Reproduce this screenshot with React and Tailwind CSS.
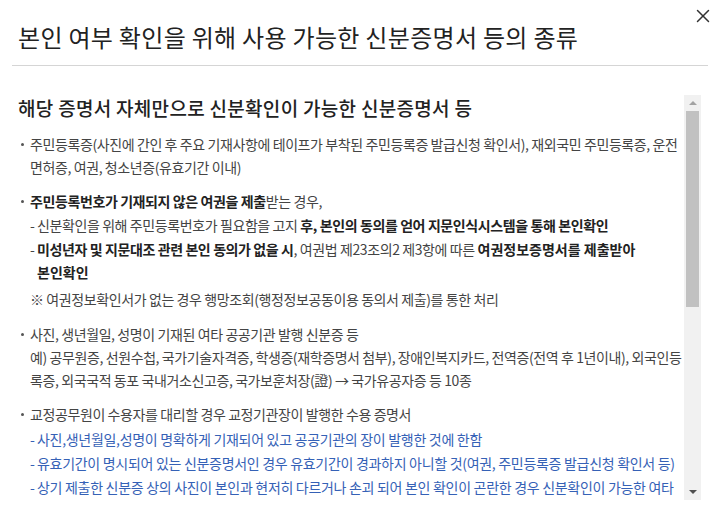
import { X } from "lucide-react";

const blue = "text-[#3561b6] tracking-[-0.3px]";

function Bullet({ children, className = "" }) {
  return (
    <li className={`flex ${className}`}>
      <span className="w-[12px] shrink-0 flex pt-[10px]">
        <span className="ml-[3px] w-[3px] h-[3px] bg-[#555] rounded-full" />
      </span>
      <div className="flex-1 min-w-0">{children}</div>
    </li>
  );
}

function Sub({ children, className = "" }) {
  return (
    <p className={`flex ${className}`}>
      <span className="shrink-0 w-[7px]">-</span>
      <span className="flex-1 min-w-0">{children}</span>
    </p>
  );
}

export default function App() {
  return (
    <div className="w-[720px] h-[506px] bg-white overflow-hidden px-[12px] font-['Noto_Sans_CJK_KR',sans-serif] text-[#444]">
      <div className="flex items-start justify-between">
        <h1 className="pl-[6px] pt-[21px] text-[24px] leading-[32px] tracking-[0.3px] text-[#222]">
          본인 여부 확인을 위해 사용 가능한 신분증명서 등의 종류
        </h1>
        <button className="mt-[5px] mr-[-6px] text-[#333]">
          <X size={22} strokeWidth={1.6} />
        </button>
      </div>
      <div className="mt-[12px] border-t border-[#d5d5d5]" />

      <div className="mt-[29px] mr-[7px] h-[405px] flex">
        <div className="flex-1 min-w-0 overflow-hidden pl-[6px] pr-[1px]">
          <h2 className="text-[19px] leading-[26px] tracking-[0.3px] text-[#222] font-medium">
            해당 증명서 자체만으로 신분확인이 가능한 신분증명서 등
          </h2>
          <ul className="mt-[12px] text-[14px] leading-[23px] tracking-[-0.4px]">
            <Bullet>
              주민등록증(사진에 간인 후 주요 기재사항에 테이프가 부착된 주민등록증 발급신청 확인서), 재외국민 주민등록증, 운전면허증, 여권, 청소년증(유효기간 이내)
            </Bullet>
            <Bullet className="mt-[11px]">
              <p>
                <b className="text-[#222]">주민등록번호가 기재되지 않은 여권을 제출</b>받는 경우,
              </p>
              <Sub className="mt-[1px]">
                신분확인을 위해 주민등록번호가 필요함을 고지{" "}
                <b className="text-[#222]">후, 본인의 동의를 얻어 지문인식시스템을 통해 본인확인</b>
              </Sub>
              <Sub className="mt-[1px]">
                <b className="text-[#222]">미성년자 및 지문대조 관련 본인 동의가 없을 시</b>, 여권법 제23조의2 제3항에 따른{" "}
                <b className="text-[#222] tracking-[0px]">
                  여권정보증명서를 제출받아 <span className="whitespace-nowrap">본인확인</span>
                </b>
              </Sub>
              <p className="mt-[4px]">※ 여권정보확인서가 없는 경우 행망조회(행정정보공동이용 동의서 제출)를 통한 처리</p>
            </Bullet>
            <Bullet className="mt-[12px]">
              <p>사진, 생년월일, 성명이 기재된 여타 공공기관 발행 신분증 등</p>
              <p>
                예) 공무원증, 선원수첩, 국가기술자격증, 학생증(재학증명서 첨부), 장애인복지카드, 전역증(전역 후 1년이내), 외국인등록증, 외국국적 동포 국내거소신고증, 국가보훈처장(證) → 국가유공자증 등 10종
              </p>
            </Bullet>
            <Bullet className="mt-[11px]">
              <p>교정공무원이 수용자를 대리할 경우 교정기관장이 발행한 수용 증명서</p>
              <Sub className={`mt-[2px] ${blue}`}>사진,생년월일,성명이 명확하게 기재되어 있고 공공기관의 장이 발행한 것에 한함</Sub>
              <Sub className={`mt-[1px] ${blue}`}>
                유효기간이 명시되어 있는 신분증명서인 경우 유효기간이 경과하지 아니할 것(여권, 주민등록증 발급신청 확인서 등)
              </Sub>
              <Sub className={`mt-[1px] ${blue}`}>
                상기 제출한 신분증 상의 사진이 본인과 현저히 다르거나 손괴 되어 본인 확인이 곤란한 경우 신분확인이 가능한 여타 신분증명서를 추가로 확인
              </Sub>
            </Bullet>
          </ul>
        </div>

        <div className="w-[17px] shrink-0 bg-[#f1f1f1] flex flex-col">
          <div className="h-[16px] flex items-center justify-center">
            <span className="w-0 h-0 border-x-[4px] border-x-transparent border-b-[4px] border-b-[#a3a3a3]" />
          </div>
          <div className="mx-[2px] h-[196px] bg-[#c1c1c1]" />
          <div className="flex-1" />
          <div className="h-[16px] flex items-center justify-center">
            <span className="w-0 h-0 border-x-[4px] border-x-transparent border-t-[4px] border-t-[#505050]" />
          </div>
        </div>
      </div>
    </div>
  );
}
